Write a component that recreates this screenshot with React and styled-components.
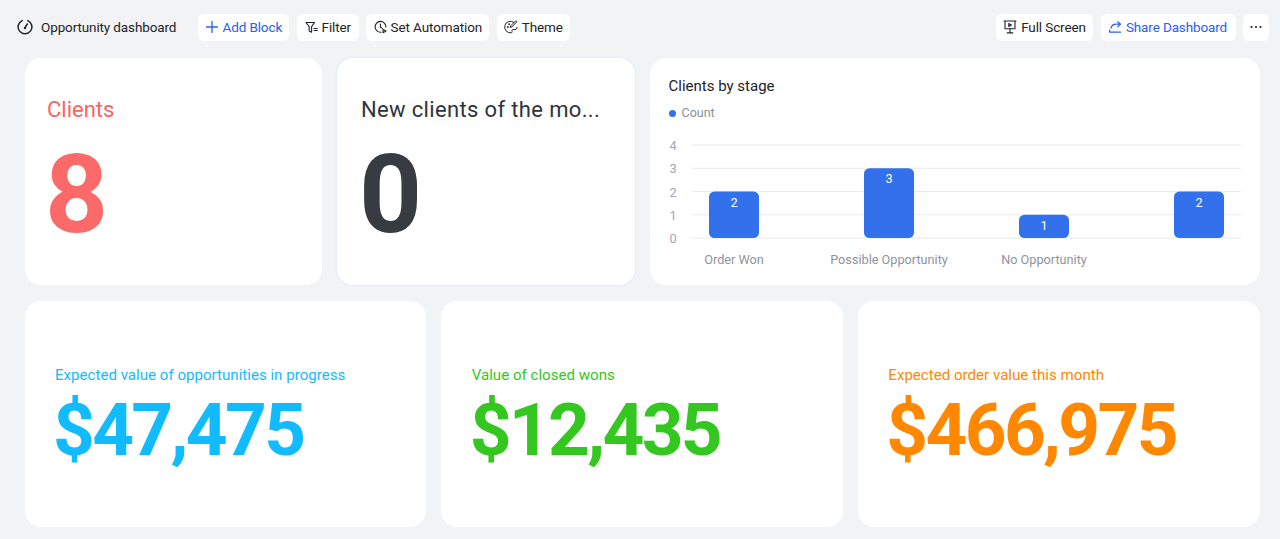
import React from "react";
import styled, { createGlobalStyle } from "styled-components";

const GlobalStyle = createGlobalStyle`
  html, body {
    margin: 0;
    padding: 0;
    height: 100%;
    background: #f2f3f5;
    font-family: Roboto, "Noto Sans", sans-serif;
    color: #1f2329;
  }
`;

const Page = styled.div`
  width: 1280px;
  height: 539px;
  overflow: hidden;
  box-sizing: border-box;
  background: #f2f3f5;
`;

const Toolbar = styled.div`
  display: flex;
  align-items: center;
  justify-content: space-between;
  height: 27px;
  padding: 14px 11px 17px 17px;
`;

const ToolGroup = styled.div`
  display: flex;
  align-items: center;
  gap: 7.5px;
`;

const DashTitle = styled.div`
  display: flex;
  align-items: center;
  gap: 8px;
  padding-bottom: 1px;
  font-size: 13.5px;
  letter-spacing: -0.12px;
  margin-right: 14.5px;
  color: #1f2329;
`;

const ToolButton = styled.button`
  display: flex;
  align-items: center;
  justify-content: center;
  gap: ${(p) => p.$gap || 4}px;
  height: 27px;
  width: ${(p) => p.$width}px;
  padding: 0 0 1px;
  border: none;
  border-radius: 6px;
  background: #fff;
  font-family: inherit;
  font-size: 13.5px;
  letter-spacing: -0.12px;
  white-space: nowrap;
  color: ${(p) => (p.$accent ? "#2860f0" : "#1f2329")};
`;

const Board = styled.div`
  display: grid;
  grid-template-columns: repeat(12, 1fr);
  grid-template-rows: 227px 226px;
  column-gap: 15px;
  row-gap: 16px;
  padding: 0 20.5px 0 24.5px;
`;

const Card = styled.div`
  grid-column: span ${(p) => p.$span};
  min-width: 0;
  box-sizing: border-box;
  background: #fff;
  border-radius: 16px;
  box-shadow: ${(p) => (p.$selected ? "0 0 0 1.5px #e9ecf9" : "none")};
`;

const StatCard = styled(Card)`
  display: flex;
  flex-direction: column;
  justify-content: center;
  padding: ${(p) => (p.$large ? `11px 20px 0 ${p.$selected ? 24 : 22.5}px` : "9px 30.5px 0")};
`;

const StatLabel = styled.div`
  white-space: nowrap;
  color: ${(p) => p.$color};
  font-size: ${(p) => (p.$large ? 22 : 15.1)}px;
  line-height: ${(p) => (p.$large ? 30 : 20)}px;
  letter-spacing: ${(p) => p.$track || 0}px;
`;

const StatValue = styled.div`
  font-weight: 700;
  color: ${(p) => p.$color};
  font-size: ${(p) => (p.$large ? 110 : 73)}px;
  line-height: ${(p) => (p.$large ? 130 : 86)}px;
  letter-spacing: ${(p) => (p.$large ? 0 : -2.7)}px;
  margin: ${(p) => (p.$large ? "5px 0 0 -2px" : "2px 0 0 -2px")};
`;

const ChartCard = styled(Card)`
  display: flex;
  flex-direction: column;
  padding: 18px 0 0 19px;
`;

const ChartTitle = styled.div`
  font-size: 15px;
  line-height: 21px;
  color: #1f2329;
`;

const Legend = styled.div`
  display: flex;
  align-items: center;
  gap: 6px;
  margin-top: 7px;
  font-size: 12.5px;
  line-height: 18px;
  color: #8a8f99;
`;

const LegendDot = styled.span`
  width: 7px;
  height: 7px;
  border-radius: 50%;
  background: #3370eb;
`;

const ChartSvg = styled.svg`
  display: block;
  flex: none;
  margin: 8px 0 0 -19px;
  font-size: 12.7px;
`;

const stroke = {
  fill: "none",
  stroke: "currentColor",
  strokeWidth: 1.3,
  strokeLinecap: "round",
  strokeLinejoin: "round",
};

const TimerIcon = () => (
  <svg width="16" height="16" viewBox="0 0 16 16" {...stroke} strokeWidth="1.5">
    <path d="M5.2 1.6a6.9 6.9 0 1 0 5.6 0" />
    <path d="M8 8.8 10.2 5" />
    <circle cx="8" cy="9" r=".5" />
  </svg>
);

const PlusIcon = () => (
  <svg width="12" height="12" viewBox="0 0 12 12" {...stroke}>
    <path d="M6 .5v11M.5 6h11" />
  </svg>
);

const FilterIcon = () => (
  <svg width="13" height="13" viewBox="0 0 13 13" {...stroke} strokeWidth="1.1">
    <path d="M1 1.5h8.5L6.6 5.6v5.6L4.2 10V5.6z" />
    <path d="M9 7.5h3.2M9 9.5h3.2" />
  </svg>
);

const AutomationIcon = () => (
  <svg width="13" height="14" viewBox="0 0 13 14" {...stroke} strokeWidth="1.1">
    <path d="M7 12.2A5.4 5.4 0 1 1 11.9 7" />
    <path d="M6.4 4v3.2l2 1.2" />
    <path d="M9 9.4l3 1.6-3 1.7z" />
  </svg>
);

const ThemeIcon = () => (
  <svg width="14" height="14" viewBox="0 0 14 14" {...stroke} strokeWidth="1">
    <path d="M9.8 2.3A5.8 5.8 0 1 0 7 12.8c1.3 0 1.4-1 1-1.6-.5-.8 0-1.6 1-1.6h2.2c1.1 0 1.8-.9 1.8-2.2" />
    <path d="M12.6 2 7.8 7l-1.6.5.5-1.7L11.5 1z" />
    <circle cx="3.6" cy="7" r=".5" />
    <circle cx="5" cy="4.2" r=".5" />
  </svg>
);

const ScreenIcon = () => (
  <svg width="14" height="14" viewBox="0 0 14 14" {...stroke} strokeWidth="1.1">
    <path d="M1 1h12M2 1v7.8h10V1" />
    <path d="M7 8.8v4M4.2 12.9h5.6" />
    <path d="M5.8 3.4v3l2.6-1.5z" />
  </svg>
);

const ShareIcon = () => (
  <svg width="13" height="12" viewBox="0 0 13 12" {...stroke} strokeWidth="1.2">
    <path d="M2 7.2C2.6 4.6 4.6 3.2 7.4 3.2h3.8" />
    <path d="M8.8.8l2.6 2.4-2.6 2.4" />
    <path d="M.6 9v2.2h11" />
  </svg>
);

const MoreIcon = () => (
  <svg width="12" height="4" viewBox="0 0 12 4" fill="currentColor">
    <circle cx="1.5" cy="2" r="1.1" />
    <circle cx="6" cy="2" r="1.1" />
    <circle cx="10.5" cy="2" r="1.1" />
  </svg>
);

const gridLines = [
  { label: "4", y: 15 },
  { label: "3", y: 38.25 },
  { label: "2", y: 61.5 },
  { label: "1", y: 84.75 },
  { label: "0", y: 108 },
];

const stages = [
  { name: "Order Won", count: 2, x: 84 },
  { name: "Possible Opportunity", count: 3, x: 239 },
  { name: "No Opportunity", count: 1, x: 394 },
  { name: "", count: 2, x: 549 },
];

function StageChart() {
  return (
    <ChartSvg width="610" height="150" viewBox="0 0 610 150">
      {gridLines.map((line) => (
        <g key={line.label}>
          <line x1="42" x2="591" y1={line.y} y2={line.y} stroke="#e8eaed" />
          <text x="23" y={line.y + 5} textAnchor="middle" fill="#a2a6ad">
            {line.label}
          </text>
        </g>
      ))}
      {stages.map((stage) => {
        const top = 108 - stage.count * 23.25;
        return (
          <g key={stage.x}>
            <rect x={stage.x - 25} y={top} width="50" height={108 - top} rx="5.5" fill="#3370eb" />
            <text x={stage.x} y={top + 15} textAnchor="middle" fill="#fff">
              {stage.count}
            </text>
            <text x={stage.x} y="134" textAnchor="middle" fill="#8f949c">
              {stage.name}
            </text>
          </g>
        );
      })}
    </ChartSvg>
  );
}

const bottomStats = [
  { label: "Expected value of opportunities in progress", value: "$47,475", color: "#12bbff" },
  { label: "Value of closed wons", value: "$12,435", color: "#33c720" },
  { label: "Expected order value this month", value: "$466,975", color: "#ff8800" },
];

export default function App() {
  return (
    <Page>
      <GlobalStyle />
      <Toolbar>
        <ToolGroup>
          <DashTitle>
            <TimerIcon />
            Opportunity dashboard
          </DashTitle>
          <ToolButton $accent $width={91} $gap={5}>
            <PlusIcon />
            Add Block
          </ToolButton>
          <ToolButton $width={62}>
            <FilterIcon />
            Filter
          </ToolButton>
          <ToolButton $width={123}>
            <AutomationIcon />
            Set Automation
          </ToolButton>
          <ToolButton $width={73}>
            <ThemeIcon />
            Theme
          </ToolButton>
        </ToolGroup>
        <ToolGroup>
          <ToolButton $width={97}>
            <ScreenIcon />
            Full Screen
          </ToolButton>
          <ToolButton $accent $width={135}>
            <ShareIcon />
            Share Dashboard
          </ToolButton>
          <ToolButton $width={26}>
            <MoreIcon />
          </ToolButton>
        </ToolGroup>
      </Toolbar>
      <Board>
        <StatCard $span={3} $large>
          <StatLabel $large $color="#f96461">Clients</StatLabel>
          <StatValue $large $color="#fb6a68">8</StatValue>
        </StatCard>
        <StatCard $span={3} $large $selected>
          <StatLabel $large $track={0.35} $color="#2f343b">New clients of the mo...</StatLabel>
          <StatValue $large $color="#373c43">0</StatValue>
        </StatCard>
        <ChartCard $span={6}>
          <ChartTitle>Clients by stage</ChartTitle>
          <Legend>
            <LegendDot />
            Count
          </Legend>
          <StageChart />
        </ChartCard>
        {bottomStats.map((stat) => (
          <StatCard $span={4} key={stat.label}>
            <StatLabel $color={stat.color}>{stat.label}</StatLabel>
            <StatValue $color={stat.color}>{stat.value}</StatValue>
          </StatCard>
        ))}
      </Board>
    </Page>
  );
}
